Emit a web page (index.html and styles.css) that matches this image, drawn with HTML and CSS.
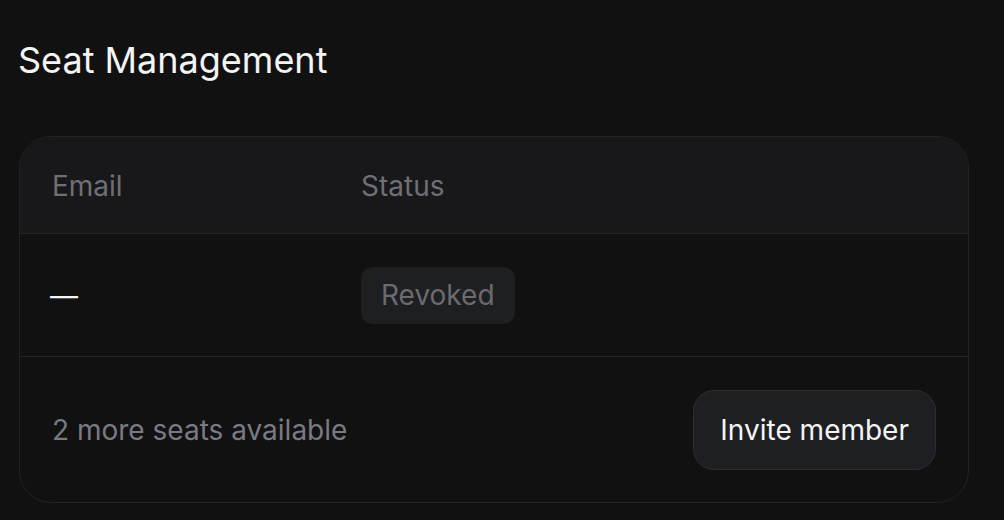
FILE: index.html
```html
<!DOCTYPE html>
<html lang="en">
<head>
<meta charset="utf-8">
<title>Seat Management</title>
<link rel="stylesheet" href="styles.css">
</head>
<body>
<main class="page">
  <h1 class="title">Seat Management</h1>
  <section class="card">
    <div class="grid head">
      <div class="cell">Email</div>
      <div class="cell">Status</div>
    </div>
    <div class="grid row">
      <div class="cell email">—</div>
      <div class="cell"><span class="badge">Revoked</span></div>
    </div>
    <div class="footer">
      <span class="seats">2 more seats available</span>
      <button class="btn" type="button">Invite member</button>
    </div>
  </section>
</main>
</body>
</html>
```

FILE: styles.css
```css
* { box-sizing: border-box; }
html, body { margin: 0; background: #111111; }
body {
  font-family: Inter, "Noto Sans", sans-serif;
  color: #f4f4f5;
}
.page {
  padding: 38px 19px 0;
}
.title {
  margin: 0 0 0 -1px;
  font-size: 36px;
  font-weight: 400;
  line-height: normal;
  color: #f4f4f5;
}
.card {
  margin-top: 54px;
  width: 950px;
  border: 1px solid #232326;
  border-radius: 32px;
  overflow: hidden;
}
.grid {
  display: grid;
  grid-template-columns: 309px 1fr;
  padding: 0 32px;
}
.cell {
  font-size: 28px;
  line-height: 32px;
}
.head {
  background: #18181b;
  padding-top: 33px;
  padding-bottom: 31px;
  border-bottom: 1px solid #232326;
  color: #6f6f76;
}
.row {
  padding-top: 33px;
  padding-bottom: 32px;
  align-items: center;
  border-bottom: 1px solid #232326;
}
.email {
  color: #f4f4f5;
  margin-left: -2px;
}
.badge {
  display: inline-block;
  background: #1e1f21;
  color: #6a6a70;
  border-radius: 12px;
  padding: 12px 20px;
  font-size: 28px;
  line-height: 33px;
}
.footer {
  display: flex;
  align-items: center;
  justify-content: space-between;
  padding: 33px 32px 32px;
}
.seats {
  font-size: 28px;
  color: #7a7a82;
}
.btn {
  font-family: inherit;
  font-size: 28px;
  height: 80px;
  padding: 0 26px;
  color: #f4f4f5;
  background: #1e1f22;
  border: 1px solid #2e2e32;
  border-radius: 21px;
}
```
